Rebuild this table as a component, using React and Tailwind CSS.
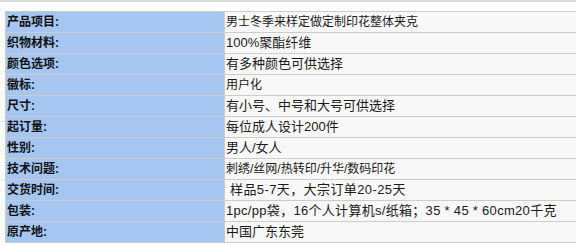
const ROWS = [
  ['产品项目:', '男士冬季来样定做定制印花整体夹克', 'text-[12px]'],
  ['织物材料:', '100%聚酯纤维', 'text-[13px]'],
  ['颜色选项:', '有多种颜色可供选择', 'text-[13px]'],
  ['徽标:', '用户化', 'text-[12px]'],
  ['尺寸:', '有小号、中号和大号可供选择', 'text-[13px]'],
  ['起订量:', '每位成人设计200件', 'text-[13px]'],
  ['性别:', '男人/女人', 'text-[13px]'],
  ['技术问题:', '刺绣/丝网/热转印/升华/数码印花', 'text-[12px]'],
  ['交货时间:', ' 样品5-7天，大宗订单20-25天', 'text-[13px] tracking-[0.4px]'],
  ['包装:', '1pc/pp袋，16个人计算机s/纸箱；35 * 45 * 60cm20千克', 'text-[13px] tracking-[0.3px]'],
  ['原产地:', '中国广东东莞', 'text-[13px]'],
]

export default function App() {
  return (
    <div className="w-[576px] h-[245px] overflow-hidden bg-white" style={{ fontFamily: '"Liberation Sans", "Noto Sans CJK SC", sans-serif' }}>
      <div className="h-[2px] bg-[#dddddd]" />
      <div className="pt-[9px] pl-[5px]">
        <div className="w-[600px] border-l border-t border-[#cccccc]">
          {ROWS.map(([label, value, size]) => (
            <div key={label} className="flex h-[21px] border-b border-[#cccccc]">
              <div className="w-[219px] shrink-0 bg-[#a4c6f1] border-r border-[#cccccc] pl-[1px] text-[12px] font-bold leading-[20px] text-[#111]">
                {label}
              </div>
              <div className={`flex-1 bg-[#f8f8f8] pl-[1px] leading-[20px] text-[#1a1a1a] whitespace-pre ${size}`}>
                {value}
              </div>
            </div>
          ))}
        </div>
      </div>
    </div>
  )
}
